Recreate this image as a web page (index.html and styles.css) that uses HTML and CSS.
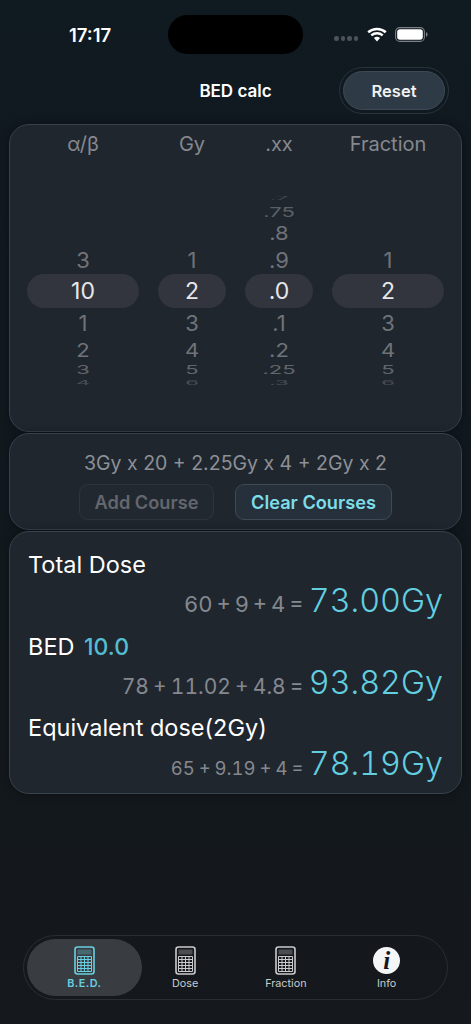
FILE: index.html
```html
<!DOCTYPE html>
<html lang="en">
<head>
    <meta charset="UTF-8">
    <meta name="viewport" content="width=device-width, initial-scale=1.0">
    <title>BED calc</title>
    <link rel="stylesheet" href="styles.css">
</head>
<body>
    <svg class="defs" width="0" height="0" aria-hidden="true">
        <symbol id="calc" viewBox="0 0 21 29">
            <rect x="1" y="1" width="19" height="27" rx="2.5" fill="none" stroke="currentColor" stroke-width="1.6"/>
            <rect x="3.5" y="3.5" width="14" height="5" fill="currentColor" opacity="0.3"/>
            <path d="M3.5 10.5h14M3.5 13.5h14M3.5 16.5h14M3.5 19.5h14M3.5 22.5h14M3.5 25.5h14M3.5 10.5v15M7 10.5v15M10.5 10.5v15M14 10.5v15M17.5 10.5v15" fill="none" stroke="currentColor" stroke-width="1"/>
        </symbol>
    </svg>

    <div class="status">
        <span class="hora">17:17</span>
        <div class="isla"></div>
        <div class="status-iconos">
            <div class="puntos"><i></i><i></i><i></i><i></i></div>
            <svg class="wifi" width="20" height="15" viewBox="0 0 20 15">
                <path d="M1.2 5.2C6.2 .9 13.8 .9 18.8 5.2M4.3 8.4C7.6 5.6 12.4 5.6 15.7 8.4" fill="none" stroke="#fff" stroke-width="2.5"/>
                <path d="M6.9 10.9C8.7 9.4 11.3 9.4 13.1 10.9L10 14.4Z" fill="#fff"/>
            </svg>
            <svg class="bateria" width="33" height="15" viewBox="0 0 33 15">
                <rect x="0.6" y="0.6" width="28.8" height="13.8" rx="4.2" fill="none" stroke="#7d8287" stroke-width="1.1"/>
                <rect x="2.2" y="2.2" width="25.6" height="10.6" rx="2.8" fill="#fff"/>
                <path d="M31 5.2c1 .3 1.6 1.2 1.6 2.3s-.6 2-1.6 2.3Z" fill="#7d8287"/>
            </svg>
        </div>
    </div>

    <header class="cabecera">
        <h1>BED calc</h1>
        <div class="reset-aro">
            <button class="reset">Reset</button>
        </div>
    </header>

    <section class="card picker">
        <div class="picker-titulos">
            <span>α/β</span>
            <span>Gy</span>
            <span>.xx</span>
            <span>Fraction</span>
        </div>
        <div class="picker-columnas">
            <div class="columna">
                <div class="fila f1"></div>
                <div class="fila f2"></div>
                <div class="fila f3"></div>
                <div class="fila f4"><span>3</span></div>
                <div class="fila sel"><span>10</span></div>
                <div class="fila f5"><span>1</span></div>
                <div class="fila f6"><span>2</span></div>
                <div class="fila f7"><span>3</span></div>
                <div class="fila f8"><span>4</span></div>
            </div>
            <div class="columna">
                <div class="fila f1"></div>
                <div class="fila f2"></div>
                <div class="fila f3"></div>
                <div class="fila f4"><span>1</span></div>
                <div class="fila sel"><span>2</span></div>
                <div class="fila f5"><span>3</span></div>
                <div class="fila f6"><span>4</span></div>
                <div class="fila f7"><span>5</span></div>
                <div class="fila f8"><span>6</span></div>
            </div>
            <div class="columna">
                <div class="fila f1"><span>.7</span></div>
                <div class="fila f2"><span>.75</span></div>
                <div class="fila f3"><span>.8</span></div>
                <div class="fila f4"><span>.9</span></div>
                <div class="fila sel"><span>.0</span></div>
                <div class="fila f5"><span>.1</span></div>
                <div class="fila f6"><span>.2</span></div>
                <div class="fila f7"><span>.25</span></div>
                <div class="fila f8"><span>.3</span></div>
            </div>
            <div class="columna">
                <div class="fila f1"></div>
                <div class="fila f2"></div>
                <div class="fila f3"></div>
                <div class="fila f4"><span>1</span></div>
                <div class="fila sel"><span>2</span></div>
                <div class="fila f5"><span>3</span></div>
                <div class="fila f6"><span>4</span></div>
                <div class="fila f7"><span>5</span></div>
                <div class="fila f8"><span>6</span></div>
            </div>
        </div>
    </section>

    <section class="card cursos">
        <p class="cursos-texto">3Gy x 20 + 2.25Gy x 4 + 2Gy x 2</p>
        <div class="cursos-botones">
            <button class="btn btn-add">Add Course</button>
            <button class="btn btn-clear">Clear Courses</button>
        </div>
    </section>

    <section class="card resultados">
        <p class="etiqueta">Total Dose</p>
        <p class="valor"><span class="suma s1">60 + 9 + 4 =</span> <span class="total">73.00Gy</span></p>
        <p class="etiqueta">BED <b class="alfa">10.0</b></p>
        <p class="valor"><span class="suma s2">78 + 11.02 + 4.8 =</span> <span class="total">93.82Gy</span></p>
        <p class="etiqueta">Equivalent dose(2Gy)</p>
        <p class="valor"><span class="suma s3">65 + 9.19 + 4 =</span> <span class="total">78.19Gy</span></p>
    </section>

    <nav class="tabs">
        <a class="tab activa">
            <svg class="tab-icono"><use href="#calc"/></svg>
            <span>B.E.D.</span>
        </a>
        <a class="tab">
            <svg class="tab-icono"><use href="#calc"/></svg>
            <span>Dose</span>
        </a>
        <a class="tab">
            <svg class="tab-icono"><use href="#calc"/></svg>
            <span>Fraction</span>
        </a>
        <a class="tab">
            <span class="info-icono">i</span>
            <span>Info</span>
        </a>
    </nav>
</body>
</html>
```

FILE: styles.css
```css
* {
    box-sizing: border-box;
}

html, body {
    height: 100%;
}

body {
    margin: 0;
    height: 1024px;
    overflow: hidden;
    display: flex;
    flex-direction: column;
    font-family: 'Inter', 'Liberation Sans', sans-serif;
    background: linear-gradient(#101a21 0, #11191f 300px, #13181c 800px, #15181c 100%);
    color: #fff;
}

p, h1 {
    margin: 0;
}

.defs {
    position: absolute;
}

/* barra de estado */
.status {
    height: 67px;
    padding-top: 15px;
    display: grid;
    grid-template-columns: 168px 135px 1fr;
    align-items: start;
}

.hora {
    text-align: center;
    padding-left: 12px;
    margin-top: 9px;
    font-size: 18.5px;
    line-height: 22px;
    font-weight: 600;
}

.isla {
    height: 39px;
    border-radius: 20px;
    background: #000;
}

.status-iconos {
    display: flex;
    align-items: center;
    padding-left: 31px;
    margin-top: 12px;
}

.puntos {
    display: flex;
    gap: 2px;
    margin-top: 8px;
    margin-right: 9px;
}

.puntos i {
    width: 4.5px;
    height: 4.5px;
    border-radius: 50%;
    background: #4c5359;
}

.wifi {
    margin-right: 8px;
}

/* cabecera */
.cabecera {
    height: 47px;
    margin-bottom: 10px;
    display: grid;
    grid-template-columns: 1fr auto 1fr;
    align-items: center;
}

.cabecera h1 {
    grid-column: 2;
    font-size: 17px;
    font-weight: 600;
}

.reset-aro {
    grid-column: 3;
    justify-self: end;
    margin-right: 22px;
    width: 110px;
    height: 47px;
    padding: 3px 3px;
    border: 1px solid #28333b;
    border-radius: 24px;
}

.reset {
    display: block;
    width: 102px;
    height: 39px;
    border: 1px solid #3d4a55;
    border-radius: 20px;
    background: #2e3b46;
    color: #f0f2f3;
    font-family: inherit;
    font-size: 16.5px;
    font-weight: 600;
}

/* tarjetas */
.card {
    margin: 0 9px 1px;
    background: #20262e;
    border: 1px solid #38414c;
    border-radius: 20px;
    box-shadow: 0 0 10px rgba(0, 0, 0, 0.35);
}

/* selector */
.picker {
    height: 308px;
    padding-top: 7px;
    overflow: hidden;
}

.picker-titulos,
.picker-columnas {
    display: grid;
    grid-template-columns: 112px 68px 68px 112px;
    gap: 19px;
    justify-content: center;
}

.picker-titulos {
    height: 60px;
    font-size: 20px;
    line-height: 24px;
    color: #85898e;
    text-align: center;
}

.picker-titulos span {
    white-space: nowrap;
    justify-self: center;
}

.columna {
    display: flex;
    flex-direction: column;
}

.fila {
    display: flex;
    align-items: center;
    justify-content: center;
    overflow: hidden;
    font-size: 22px;
    color: #6f7379;
}

.fila span {
    display: block;
    line-height: 1;
}

.f1 { height: 12px; color: #44484e; }
.f1 span { transform: scaleY(.2); }
.f2 { height: 16px; color: #5c6066; }
.f2 span { transform: scaleY(.62); }
.f3 { height: 25px; }
.f3 span { transform: scaleY(.87); }
.f4 { height: 29px; }
.f4 span { transform: scaleY(.95); }
.f5 { height: 29.5px; }
.f5 span { transform: scaleY(.97); }
.f6 { height: 24px; }
.f6 span { transform: scaleY(.87); }
.f7 { height: 17px; color: #62666c; }
.f7 span { transform: scaleY(.55); }
.f8 { height: 7px; padding-top: 1px; color: #4a4e54; align-items: flex-start; }
.f8 span { transform: scaleY(.25); transform-origin: top; }

.sel {
    height: 34px;
    border-radius: 17px;
    background: #32353d;
    color: #e6e7e9;
    font-size: 23px;
}

/* cursos */
.cursos {
    height: 97px;
    padding-top: 17px;
}

.cursos-texto {
    text-align: center;
    font-size: 19.5px;
    line-height: 24px;
    color: #8d9095;
}

.cursos-botones {
    display: flex;
    justify-content: center;
    gap: 21px;
    margin-top: 9px;
}

.btn {
    height: 36px;
    border-radius: 9px;
    font-family: inherit;
    font-size: 18.2px;
    font-weight: 600;
}

.btn-add {
    width: 135px;
    background: #22282f;
    border: 1px solid #2d343c;
    color: #63676d;
}

.btn-clear {
    width: 157px;
    background: #26303b;
    border: 1px solid #3e4956;
    color: #7ddde9;
}

/* resultados */
.resultados {
    height: 263px;
    padding: 14px 18px 0 18px;
}

.etiqueta {
    height: 37px;
    font-size: 23.5px;
    line-height: 37px;
}

.alfa {
    margin-left: 3px;
    font-size: 23px;
    font-weight: 500;
    color: #54bdd2;
}

.valor {
    height: 44.5px;
    line-height: 36px;
    text-align: right;
    white-space: nowrap;
    font-variant-numeric: tabular-nums;
}

.suma {
    color: #85888e;
    margin-right: 1px;
}

.s1 {
    font-size: 22px;
    word-spacing: -2px;
}

.s2 {
    font-size: 21px;
    word-spacing: -1.5px;
}

.s3 {
    font-size: 18.5px;
    word-spacing: -1px;
}

.total {
    font-size: 32.3px;
    font-weight: 300;
    color: #62cfe0;
}

/* barra inferior */
.tabs {
    margin: auto 23px 24px;
    height: 65px;
    padding: 3px 10px;
    display: flex;
    border: 1px solid #2a2e33;
    border-radius: 33px;
}

.tab {
    width: 101px;
    display: flex;
    flex-direction: column;
    align-items: center;
    padding-top: 7px;
    font-size: 10.8px;
    line-height: 13px;
    font-weight: 400;
    color: #c9cbcd;
}

.activa {
    width: 115px;
    margin: 0 -7px;
    border-radius: 29px;
    background: #393c41;
    color: #68d0e2;
    font-weight: 600;
    letter-spacing: .5px;
}

.tab-icono {
    width: 21px;
    height: 29px;
    margin-bottom: 2px;
}

.info-icono {
    width: 27px;
    height: 27px;
    margin: 1px 0 3px;
    border-radius: 50%;
    background: #f4f5f6;
    color: #15181c;
    text-align: center;
    font-family: 'Liberation Serif', serif;
    font-size: 25px;
    font-style: italic;
    font-weight: 700;
    line-height: 27px;
}
```
